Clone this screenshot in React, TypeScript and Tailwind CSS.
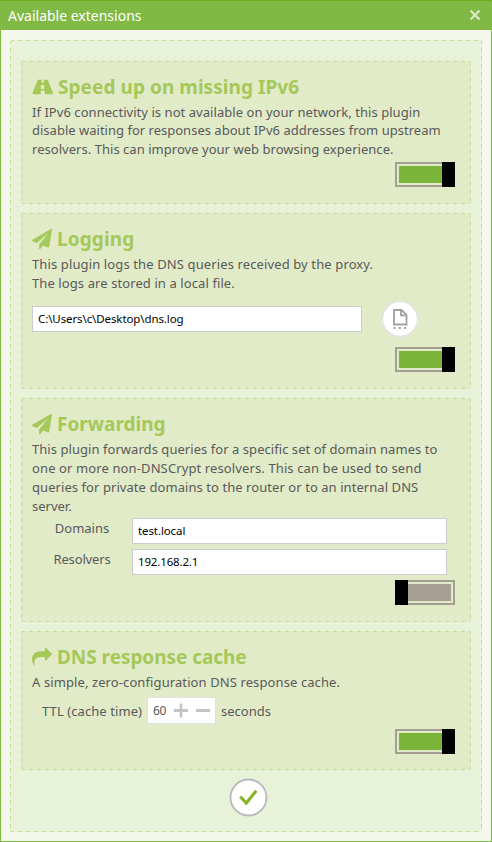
import React from "react";

const edges =
  "bg-[repeating-linear-gradient(90deg,#c9dc9b_0_4px,transparent_4px_8px),repeating-linear-gradient(90deg,#c9dc9b_0_4px,transparent_4px_8px),repeating-linear-gradient(180deg,#c9dc9b_0_4px,transparent_4px_8px),repeating-linear-gradient(180deg,#c9dc9b_0_4px,transparent_4px_8px)] bg-[length:100%_1px,100%_1px,1px_100%,1px_100%] bg-[position:0_0,0_100%,0_0,100%_0] bg-no-repeat";

function Road() {
  return (
    <svg className="mb-[1px] h-[20px] w-[21px]" viewBox="25 80 1870 1792" fill="currentColor">
      <path d="M1111 1120v-4l-24-320q-1-13-11-22.5t-23-9.5h-186q-13 0-23 9.5t-11 22.5l-24 320v4q-1 12 8 20t21 8h244q12 0 21-8t8-20zm784 423q0 73-46 73h-704q13 0 22-9.5t8-22.5l-20-256q-1-13-11-22.5t-23-9.5h-272q-13 0-23 9.5t-11 22.5l-20 256q-1 13 8 22.5t22 9.5h-704q-46 0-46-73 0-54 26-116l417-1044q8-19 26-33t38-14h339q-13 0-23 9.5t-11 22.5l-15 192q-1 14 8 23t22 9h166q13 0 22-9t8-23l-15-192q-1-13-11-22.5t-23-9.5h339q20 0 38 14t26 33l417 1044q26 62 26 116z" />
    </svg>
  );
}

function Plane() {
  return (
    <svg className="mb-[1px] h-[20px] w-[20px]" viewBox="0 0 1792 1792" fill="currentColor">
      <path d="M1764 11q33 24 27 64l-256 1536q-5 29-32 45-14 8-31 8-11 0-24-5l-453-185-242 295q-18 23-49 23-13 0-22-4-19-7-30.5-23.5t-11.5-36.5v-349l864-1059-1069 925-395-162q-37-14-40-55-2-40 32-59l1664-960q15-9 32-9 20 0 36 11z" />
    </svg>
  );
}

function Share() {
  return (
    <svg className="mb-[1px] h-[20px] w-[20px]" viewBox="0 0 1792 1792" fill="currentColor">
      <path d="M1792 640q0 26-19 45l-512 512q-19 19-45 19t-45-19-19-45v-256h-224q-98 0-175.500 6t-154 21.500-133 42.500-105.500 69.500-80 101-48.500 138.500-17.500 181q0 55 5 123 0 6 2.500 23.500t2.500 26.500q0 15-8.500 25t-23.500 10q-16 0-28-17-7-9-13-22t-13.500-30-10.500-24q-127-285-127-451 0-199 53-333 162-403 875-403h224v-256q0-26 19-45t45-19 45 19l512 512q19 19 19 45z" />
    </svg>
  );
}

function Toggle({ on = true, className = "" }: { on?: boolean; className?: string }) {
  return (
    <div className={`ml-auto mr-[16px] flex h-[25px] w-[60px] bg-[#a59e93] ${on ? "" : "flex-row-reverse"} ${className}`}>
      <div className={`my-[2px] h-[21px] w-[45px] bg-[#e1ebc8] py-[2px] ${on ? "ml-[2px] pl-[2px]" : "mr-[2px] pr-[2px]"}`}>
        <div className={`h-[17px] ${on ? "bg-[#7ab53a]" : "bg-[#a59e93]"}`} />
      </div>
      <div className="h-[25px] w-[13px] bg-black" />
    </div>
  );
}

function Card({ className, children }: { className: string; children: React.ReactNode }) {
  return <section className={`w-[450px] rounded-[2px] bg-[#e1ebc8] pl-[11px] ${edges} ${className}`}>{children}</section>;
}

function Title({ icon, text, className }: { icon: React.ReactNode; text: string; className: string }) {
  return (
    <h2 className="flex h-[27px] items-center text-[19px] font-bold text-[#a5c859]">
      <span className="flex w-[25px] shrink-0 items-center">{icon}</span>
      <span className={`whitespace-nowrap ${className}`}>{text}</span>
    </h2>
  );
}

function Line({ text, className }: { text: string; className: string }) {
  return <div className={`whitespace-nowrap ${className}`}>{text}</div>;
}

function Field({ text, className }: { text: string; className: string }) {
  return (
    <div className={`flex h-[26px] items-center border border-[#cccccc] bg-white pl-[5px] text-[11.5px] text-black ${className}`}>
      {text}
    </div>
  );
}

export default function App() {
  return (
    <div className="flex h-[842px] w-[492px] flex-col border border-[#80b941] border-t-[#68ad1e] bg-[#f3f8ea] font-['Noto_Sans','Open_Sans',sans-serif] text-[13px] leading-[18.7px] text-[#595959]">
      <header className="flex h-[29px] shrink-0 items-center justify-between bg-[#80b944] pl-[7px] pr-[10px] text-[14px] text-white">
        <span className="mt-[1px] whitespace-nowrap">Available extensions</span>
        <svg className="mb-[1px] h-[12px] w-[12px]" viewBox="0 0 12 12" fill="none" stroke="#d9eac5" strokeWidth="2.2">
          <path d="M1.500 1.500 10.500 10.500M10.500 1.500 1.500 10.500" />
        </svg>
      </header>
      <main className={`ml-[9px] mt-[10px] h-[792px] w-[472px] shrink-0 rounded-[2px] bg-[#e8f2d9] pl-[11px] pt-[21px] ${edges}`}>
        <Card className="h-[143px] pt-[13px]">
          <Title icon={<Road />} text="Speed up on missing IPv6" className="ml-[1px] tracking-[0.06px]" />
          <Line text="If IPv6 connectivity is not available on your network, this plugin" className="mt-[1.5px] tracking-[0.05px]" />
          <Line text="disable waiting for responses about IPv6 addresses from upstream" className="tracking-[0.01px]" />
          <Line text="resolvers. This can improve your web browsing experience." className="tracking-[0.035px]" />
          <Toggle className="mt-[3.400px]" />
        </Card>
        <Card className="mt-[9px] h-[176px] pt-[13px]">
          <Title icon={<Plane />} text="Logging" className="tracking-[0.1px]" />
          <Line text="This plugin logs the DNS queries received by the proxy." className="mt-[2px] tracking-[0.12px]" />
          <Line text="The logs are stored in a local file." className="tracking-[0.095px]" />
          <div className="mt-[7.600px] flex h-[38px] items-center">
            <Field text="C:\Users\c\Desktop\dns.log" className="w-[330px] tracking-[-0.1px]" />
            <svg className="ml-[19px] h-[38px] w-[38px]" viewBox="0 0 38 38">
              <circle cx="19" cy="19" r="17.6" fill="#fff" stroke="#e4e4e4" strokeWidth="1.7" />
              <path d="M13 10h7.600l4.900 4.900v9.600H13zM20 10v5.300h5.200" fill="none" stroke="#a1a1a1" strokeWidth="1.8" />
              <path d="M12.500 28h2M17.800 28h2M23 28h2" stroke="#a1a1a1" strokeWidth="2" />
            </svg>
          </div>
          <Toggle className="mt-[9px]" />
        </Card>
        <Card className="mt-[9px] h-[224px] pt-[13px]">
          <Title icon={<Plane />} text="Forwarding" className="" />
          <Line text="This plugin forwards queries for a specific set of domain names to" className="mt-[2.400px] tracking-[0.05px]" />
          <Line text="one or more non-DNSCrypt resolvers. This can be used to send" className="tracking-[0.115px]" />
          <Line text="queries for private domains to the router or to an internal DNS" className="tracking-[0.065px]" />
          <Line text="server." className="" />
          <div className="mt-[2.800px] flex h-[26px]">
            <div className="mt-[1px] w-[100px] text-center">Domains</div>
            <Field text="test.local" className="w-[315px] tracking-[-0.1px]" />
          </div>
          <div className="mt-[5px] flex h-[26px]">
            <div className="mt-[1px] w-[100px] text-center tracking-[-0.15px]">Resolvers</div>
            <Field text="192.168.2.1" className="w-[315px] tracking-[-0.15px]" />
          </div>
          <Toggle on={false} className="mt-[5px]" />
        </Card>
        <Card className="mt-[9px] h-[139px] pt-[13px]">
          <Title icon={<Share />} text="DNS response cache" className="tracking-[-0.05px]" />
          <Line text="A simple, zero-configuration DNS response cache." className="mt-[2.300px] tracking-[0.1px]" />
          <div className="mt-[5px] flex h-[27px] items-center">
            <span className="ml-[10px] mt-[1px] w-[105px] whitespace-nowrap tracking-[0.08px]">TTL (cache time)</span>
            <div className="flex h-[27px] w-[69px] items-center border border-[#e0e0e0] bg-white pl-[5px] text-[12px]">
              <span className="w-[21px] pt-[1px] tracking-[-0.3px]">60</span>
              <svg className="h-[16px] w-[38px]" viewBox="0 0 38 16" stroke="#c3c3c3">
                <path d="M0 7.500h14M22 7.500h14" strokeWidth="3" />
                <path d="M7 .5v14" strokeWidth="2.600" />
              </svg>
            </div>
            <span className="ml-[5px] mt-[1px]">seconds</span>
          </div>
          <Toggle className="mt-[5px]" />
        </Card>
        <svg className="ml-[207px] mt-[7px] h-[40px] w-[40px]" viewBox="0 0 40 40">
          <circle cx="20.5" cy="20.5" r="18" fill="#fff" stroke="#b8b8b8" strokeWidth="1.8" />
          <path d="M12.300 19.700l6 6.300 10-12.300" fill="none" stroke="#8ab42a" strokeWidth="3.200" />
        </svg>
      </main>
    </div>
  );
}
